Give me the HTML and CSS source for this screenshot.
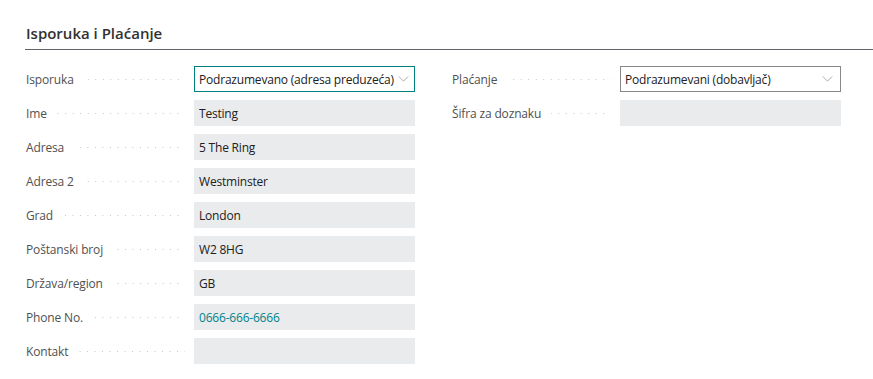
FILE: index.html
```html
<!DOCTYPE html>
<html lang="sr">
<head>
  <meta charset="UTF-8">
  <title>Isporuka i Plaćanje</title>
  <link rel="stylesheet" href="styles.css">
</head>
<body>
  <section class="fasttab">
    <h2 class="fasttab-title">Isporuka i Plaćanje</h2>
    <div class="columns">
      <div class="column">
        <div class="field">
          <span class="caption">Isporuka</span><span class="leader"></span>
          <div class="value select focused"><span class="text">Podrazumevano (adresa preduzeća)</span>
            <svg class="chevron" viewBox="0 0 12 7"><path d="M0.5 0.5 L6 6 L11.5 0.5"/></svg>
          </div>
        </div>
        <div class="field">
          <span class="caption">Ime</span><span class="leader"></span>
          <div class="value"><span class="text">Testing</span></div>
        </div>
        <div class="field">
          <span class="caption">Adresa</span><span class="leader"></span>
          <div class="value"><span class="text">5 The Ring</span></div>
        </div>
        <div class="field">
          <span class="caption">Adresa 2</span><span class="leader"></span>
          <div class="value"><span class="text">Westminster</span></div>
        </div>
        <div class="field">
          <span class="caption">Grad</span><span class="leader"></span>
          <div class="value"><span class="text">London</span></div>
        </div>
        <div class="field">
          <span class="caption">Poštanski broj</span><span class="leader"></span>
          <div class="value"><span class="text">W2 8HG</span></div>
        </div>
        <div class="field">
          <span class="caption">Država/region</span><span class="leader"></span>
          <div class="value"><span class="text">GB</span></div>
        </div>
        <div class="field">
          <span class="caption">Phone No.</span><span class="leader"></span>
          <div class="value"><span class="text link">0666-666-6666</span></div>
        </div>
        <div class="field">
          <span class="caption">Kontakt</span><span class="leader"></span>
          <div class="value"></div>
        </div>
      </div>
      <div class="column">
        <div class="field">
          <span class="caption">Plaćanje</span><span class="leader"></span>
          <div class="value select"><span class="text">Podrazumevani (dobavljač)</span>
            <svg class="chevron" viewBox="0 0 12 7"><path d="M0.5 0.5 L6 6 L11.5 0.5"/></svg>
          </div>
        </div>
        <div class="field">
          <span class="caption">Šifra za doznaku</span><span class="leader"></span>
          <div class="value"></div>
        </div>
      </div>
    </div>
  </section>
</body>
</html>
```

FILE: styles.css
```css
body {
  margin: 0;
  background: #fff;
  font-family: "Open Sans", "Noto Sans", sans-serif;
  color: #212121;
}
.fasttab {
  padding: 22px 0 0 25px;
}
.fasttab-title {
  margin: 0;
  padding: 0 0 5px 1px;
  font-size: 15px;
  font-weight: 600;
  line-height: 22px;
  color: #323130;
  border-bottom: 1px solid #5f6368;
}
.columns {
  display: flex;
  gap: 36px;
  padding-top: 16px;
}
.column {
  width: 390px;
  display: flex;
  flex-direction: column;
  gap: 8px;
}
.field {
  display: flex;
  align-items: center;
  height: 26px;
}
.caption {
  font-size: 12px;
  letter-spacing: -0.15px;
  color: #505050;
  white-space: nowrap;
  padding-left: 1px;
}
.leader {
  flex: 1;
  height: 1px;
  margin: 1px 9px 0 10px;
  background-image: linear-gradient(to right, #c4c4c4 1px, transparent 1px);
  background-size: 7.5px 1px;
  background-repeat: repeat-x;
  background-position: right center;
}
.value {
  width: 221px;
  height: 26px;
  box-sizing: border-box;
  background: #eaebec;
  display: flex;
  align-items: center;
  padding: 0 5px;
  flex-shrink: 0;
}
.text {
  font-size: 12px;
  letter-spacing: -0.2px;
  white-space: nowrap;
  overflow: hidden;
  flex: 1;
}
.link {
  color: #00838a;
}
.select {
  background: #fff;
  border: 1px solid #8a8886;
  padding: 0 7px 0 4px;
}
.select.focused {
  border-color: #00807e;
  padding-right: 5px;
}
.chevron {
  width: 11px;
  height: 6px;
  margin-left: 3px;
  fill: none;
  stroke: #a19f9d;
  stroke-width: 1;
}
```
